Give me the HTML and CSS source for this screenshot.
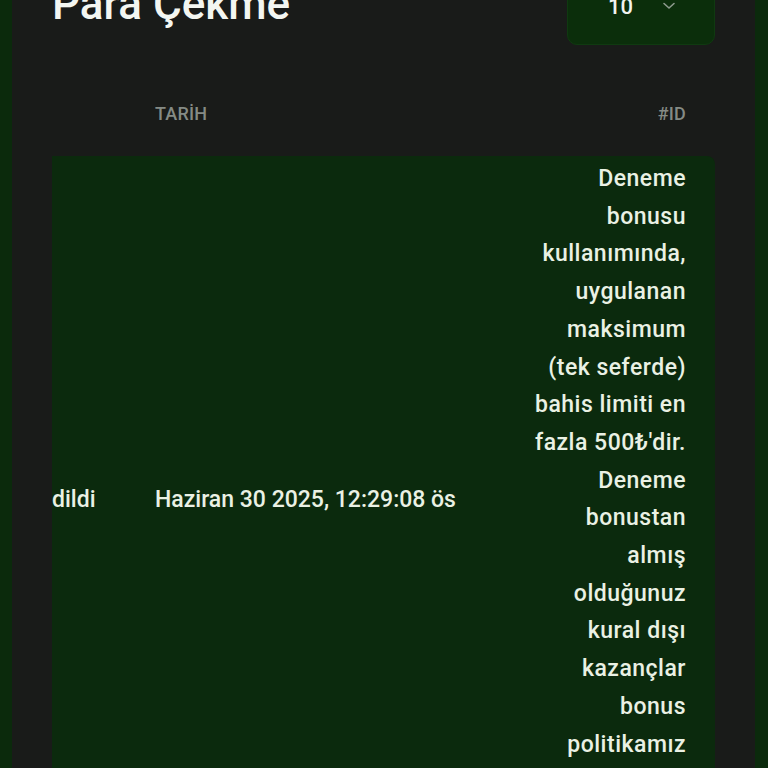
FILE: index.html
```html
<!DOCTYPE html>
<html lang="tr">
<head>
<meta charset="utf-8">
<title>Para Çekme</title>
<link rel="stylesheet" href="styles.css">
</head>
<body>
<div class="panel">
  <div class="top">
    <h1 class="title">Para Çekme</h1>
    <div class="select">
      <span class="select-value">10</span>
      <svg class="chev" width="14" height="8" viewBox="0 0 14 8"><path d="M2 1.5 L7 6 L12 1.5" fill="none" stroke="#8d9a8d" stroke-width="1.6" stroke-linecap="round" stroke-linejoin="round"/></svg>
    </div>
  </div>
  <div class="scroller">
    <div class="track">
      <div class="head">
        <div class="hcell"></div>
        <div class="hcell">TARİH</div>
        <div class="hcell right">#ID</div>
      </div>
      <div class="row">
        <div class="cell status">Reddedildi</div>
        <div class="cell date">Haziran 30 2025, 12:29:08 ös</div>
        <div class="cell desc">Deneme<br>bonusu<br>kullanımında,<br>uygulanan<br>maksimum<br>(tek seferde)<br>bahis limiti en<br>fazla 500₺'dir.<br>Deneme<br>bonustan<br>almış<br>olduğunuz<br>kural dışı<br>kazançlar<br>bonus<br>politikamız<br>gereği iptal<br>edilecektir.</div>
      </div>
    </div>
  </div>
</div>
</body>
</html>
```
FILE: styles.css
```css
html, body {
  margin: 0;
  padding: 0;
  height: 100%;
  overflow: hidden;
}
body {
  background: #0b2a0c;
  font-family: Roboto, "Liberation Sans", sans-serif;
  color: #eaf1e4;
}
.panel {
  margin: -33px 13px 0 12px;
  background: #191b19;
  padding: 0 40px;
  min-height: 900px;
}
.top {
  display: flex;
  justify-content: space-between;
  align-items: flex-start;
}
.title {
  margin: 11px 0 0;
  font-size: 44px;
  line-height: 52px;
  font-weight: 500;
  color: #f3f6f1;
}
.select {
  width: 148px;
  height: 78px;
  box-sizing: border-box;
  background: #0b2e0b;
  border: 1px solid #0f3a10;
  border-radius: 10px;
  display: flex;
  align-items: center;
  padding: 0 38px 0 40px;
  justify-content: space-between;
}
.select-value {
  font-size: 22px;
  font-weight: 500;
  color: #f1f4ef;
}
.chev {
  display: block;
}
.scroller {
  margin-top: 46px;
  overflow: hidden;
  border-radius: 8px 8px 0 0;
}
.track {
  margin-left: -89px;
  width: 752px;
}
.head, .row {
  display: grid;
  grid-template-columns: 168px 376px 208px;
}
.head {
  height: 44px;
  align-items: center;
  margin-bottom: 21px;
}
.hcell {
  padding-left: 24px;
  font-size: 18px;
  font-weight: 500;
  color: #858b85;
  letter-spacing: 0.2px;
}
.hcell.right {
  text-align: right;
  padding-right: 29px;
}
.row {
  background: #0b2a0d;
  align-items: center;
  border-radius: 8px 8px 0 0;
}
.cell {
  padding-left: 24px;
  font-size: 23px;
  font-weight: 500;
  color: #eaf1e4;
  white-space: nowrap;
}
.desc {
  text-align: right;
  padding: 4px 29px 4px 0;
  line-height: 37.7px;
  letter-spacing: 0.5px;
}
```
